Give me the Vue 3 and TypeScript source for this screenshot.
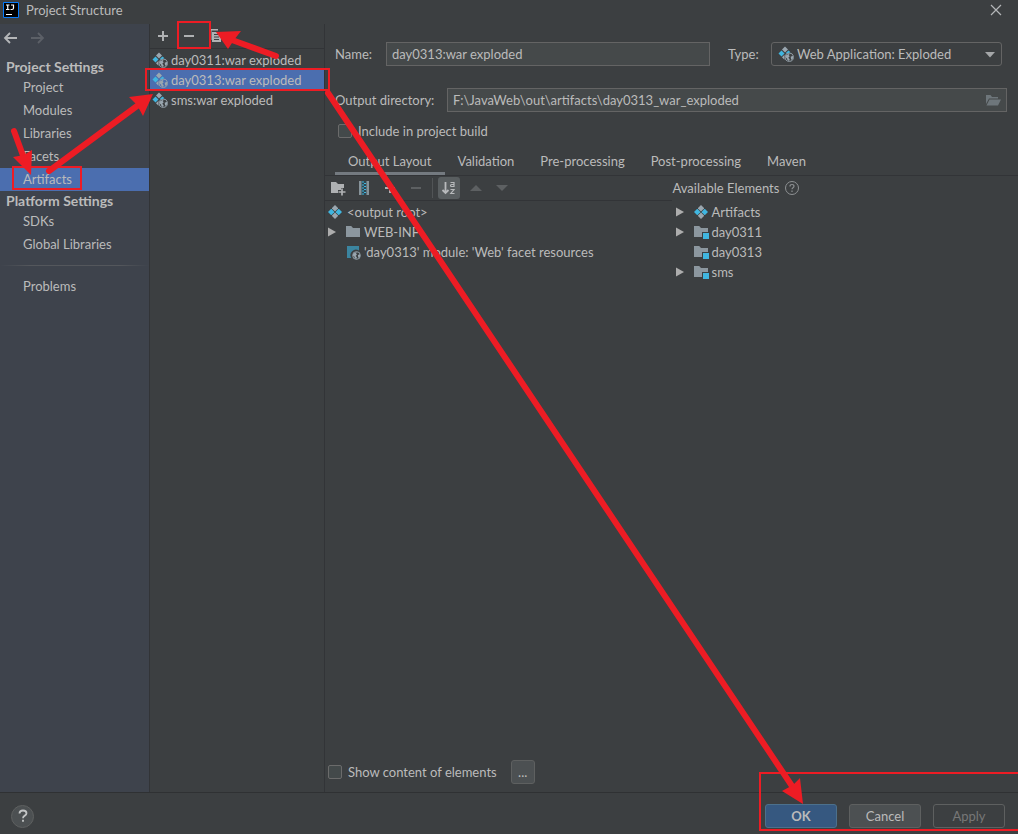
<script setup lang="ts">
import { ref } from 'vue'

interface TreeItem {
  label: string
  icon: 'artifact' | 'folder' | 'module' | 'facet'
  expandable: boolean
}

const projectItems = ['Project', 'Modules', 'Libraries', 'Facets', 'Artifacts']
const platformItems = ['SDKs', 'Global Libraries']
const section = ref('Artifacts')

const artifacts = ['day0311:war exploded', 'day0313:war exploded', 'sms:war exploded']
const current = ref('day0313:war exploded')

const name = ref('day0313:war exploded')
const outputDir = ref('F:\\JavaWeb\\out\\artifacts\\day0313_war_exploded')
const type = ref('Web Application: Exploded')
const includeInBuild = ref(false)
const showContent = ref(false)

const tabs = ['Output Layout', 'Validation', 'Pre-processing', 'Post-processing', 'Maven']
const tab = ref('Output Layout')

const layoutTree: TreeItem[] = [
  { label: 'WEB-INF', icon: 'folder', expandable: true },
  { label: "'day0313' module: 'Web' facet resources", icon: 'facet', expandable: false },
]
const available: TreeItem[] = [
  { label: 'Artifacts', icon: 'artifact', expandable: true },
  { label: 'day0311', icon: 'module', expandable: true },
  { label: 'day0313', icon: 'module', expandable: false },
  { label: 'sms', icon: 'module', expandable: true },
]
</script>

<template>
  <div class="dialog">
    <svg class="defs" width="0" height="0" aria-hidden="true">
      <symbol id="i-artifact" viewBox="0 0 16 16">
        <path d="M8 1l3 3v.6L8.300 7.200h-.6L5 4.600V4z" fill="#9aa7b0" />
        <path d="M8 15l3-3v-.6L8.300 8.800h-.6L5 11.400v.6z" fill="#9aa7b0" />
        <path d="M1 8l3-3h.6l2.600 2.700v.6L4.600 11H4z" fill="#40b6e0" />
        <path d="M15 8l-3-3h-.6L8.800 7.700v.6l2.600 2.700h.6z" fill="#40b6e0" />
      </symbol>
      <symbol id="i-globe" viewBox="0 0 10 10">
        <circle cx="5" cy="5" r="4.300" fill="none" stroke="#9aa7b0" stroke-width="1" />
        <path d="M1.200 3.200L3 2l2.500-.8L4.500 2.800 5.500 4 4 5.500 5.500 7 4.800 9 3 8 2.800 6.500 1 5zM6.500 4.500L8.800 3.500 9 6 7.500 8 6.800 6.500z" fill="#9aa7b0" />
      </symbol>
      <symbol id="i-web" viewBox="0 0 16 16">
        <path d="M7 .5l3 3-3 3-3-3z" fill="#9aa7b0" />
        <path d="M3.500 4.500l3 3-3 3-3-3z" fill="#40b6e0" />
        <path d="M10.500 4.500l2 1.700-3.500 1.600L7.800 7z" fill="#40b6e0" />
        <path d="M6.500 8.800v5L4 11.300z" fill="#9aa7b0" />
        <use href="#i-globe" x="6.500" y="6.500" width="9.500" height="9.500" />
      </symbol>
      <symbol id="i-folder" viewBox="0 0 16 16">
        <path d="M1 2h5.200l1.800 2h7v9H1z" fill="#8c979f" />
      </symbol>
      <symbol id="i-module" viewBox="0 0 16 16">
        <path d="M1 2h5.200l1.800 2h7v4H9v5H1z" fill="#8c979f" />
        <path d="M10 9h6v6h-6z" fill="#40b6e0" />
      </symbol>
      <symbol id="i-facet" viewBox="0 0 16 16">
        <path d="M2 2h12v4.500A5.500 5.500 0 0 0 6.300 14H2z" fill="#3b85a0" />
        <use href="#i-globe" x="7" y="7" width="9" height="9" />
      </symbol>
      <symbol id="i-expand" viewBox="0 0 10 10">
        <path d="M1 .5L9 5 1 9.500z" fill="#adadad" />
      </symbol>
      <symbol id="i-plus" viewBox="0 0 16 16">
        <path d="M8 3v10M3 8h10" stroke="#afb1b3" stroke-width="2" />
      </symbol>
      <symbol id="i-minus" viewBox="0 0 16 16">
        <path d="M3 8h10" stroke="currentColor" stroke-width="2" />
      </symbol>
    </svg>

    <header class="titlebar">
      <svg class="logo" width="16" height="16" viewBox="0 0 16 16" aria-hidden="true">
        <path d="M.5.500h15v15H.5z" fill="#000" stroke="#087cfa" />
        <path d="M3 3h3.500M3 7.500h3.500M4.750 3v4.500M8 3h2.500v3q0 1.500-1.500 1.500H7.500M3 12.500h6" fill="none" stroke="#fff" stroke-width="1.200" />
      </svg>
      <h1>Project Structure</h1>
      <button class="plain close" aria-label="Close">
        <svg width="12" height="12" viewBox="0 0 12 12"><path d="M1 1l10 10M11 1L1 11" stroke="#b4b6b8" stroke-width="1.200" /></svg>
      </button>
    </header>

    <div class="body">
      <nav class="sidebar">
        <div class="history">
          <button class="plain" aria-label="Back">
            <svg width="16" height="16" viewBox="0 0 16 16"><path d="M14 8H2.500M7 3L2 8l5 5" fill="none" stroke="#b4b6b8" stroke-width="1.800" /></svg>
          </button>
          <button class="plain" aria-label="Forward" disabled>
            <svg width="16" height="16" viewBox="0 0 16 16"><path d="M2 8h11.500M9 3l5 5-5 5" fill="none" stroke="#5c6067" stroke-width="1.800" /></svg>
          </button>
        </div>
        <h2>Project Settings</h2>
        <button v-for="item in projectItems" :key="item" class="nav-item" :class="{ selected: section === item }" @click="section = item">{{ item }}</button>
        <h2>Platform Settings</h2>
        <button v-for="item in platformItems" :key="item" class="nav-item" :class="{ selected: section === item }" @click="section = item">{{ item }}</button>
        <hr />
        <button class="nav-item">Problems</button>
      </nav>

      <section class="artifacts">
        <div class="bar">
          <button class="plain" aria-label="Add"><svg width="16" height="16"><use href="#i-plus" /></svg></button>
          <button class="plain" aria-label="Remove"><svg width="16" height="16"><use href="#i-minus" /></svg></button>
          <button class="plain" aria-label="Copy">
            <svg width="16" height="16" viewBox="0 0 16 16"><path d="M3 1h8v1.500H4.500V12H3z" fill="#afb1b3" /><path d="M5 4h9v10H5z" fill="#afb1b3" /><path d="M7 6.500h5M7 9h5M7 11.500h5" stroke="#3c3f41" /></svg>
          </button>
        </div>
        <ul>
          <li v-for="item in artifacts" :key="item">
            <button class="artifact" :class="{ selected: current === item }" @click="current = item">
              <svg width="16" height="16"><use href="#i-web" /></svg>{{ item }}
            </button>
          </li>
        </ul>
      </section>

      <main class="editor">
        <div class="row name-row">
          <label for="name">Name:</label>
          <input id="name" v-model="name" class="field" type="text" />
          <label for="type" class="type-label">Type:</label>
          <div class="combo">
            <svg class="combo-icon" width="16" height="16"><use href="#i-web" /></svg>
            <select id="type" v-model="type">
              <option>Web Application: Exploded</option>
            </select>
            <svg class="combo-arrow" width="10" height="6" viewBox="0 0 10 6"><path d="M0 0h10L5 5.500z" fill="#a5a7a9" /></svg>
          </div>
        </div>
        <div class="row output-row">
          <label for="output">Output directory:</label>
          <div class="field path">
            <input id="output" v-model="outputDir" type="text" />
            <button class="plain" aria-label="Browse">
              <svg width="16" height="16" viewBox="0 0 16 16"><path d="M1 3h4.500l1.500 2h6v1.500H4L1 12z" fill="#6e767b" /><path d="M4.500 7.500H16L13 13.500H1.500z" fill="#6e767b" /></svg>
            </button>
          </div>
        </div>
        <label class="check include"><input v-model="includeInBuild" type="checkbox" />Include in project build</label>

        <div class="tabs" role="tablist">
          <button v-for="item in tabs" :key="item" role="tab" :aria-selected="tab === item" :class="{ active: tab === item }" @click="tab = item">{{ item }}</button>
        </div>

        <div class="panes">
          <section class="layout">
            <div class="bar tools">
              <button class="plain" aria-label="Create directory">
                <svg width="16" height="16" viewBox="0 0 16 16"><path d="M1 2h5l2 2h6v4h-3v2H8v3H1z" fill="#afb1b3" /><path d="M12 8.500v7M8.500 12h7" stroke="#afb1b3" stroke-width="1.700" /></svg>
              </button>
              <button class="plain" aria-label="Create archive">
                <svg width="16" height="16" viewBox="0 0 16 16"><path d="M3 1h10v14H3z" fill="#87939a" /><path d="M5.500 1h5v14h-5z" fill="#2f4650" /><path d="M6 2h2m0 1.500h2M6 5h2m0 1.500h2M6 8h2m0 1.500h2M6 11h2m0 1.500h2M6 14h2" stroke="#40b6e0" /></svg>
              </button>
              <button class="plain" aria-label="Add copy of"><svg width="16" height="16"><use href="#i-plus" /></svg></button>
              <button class="plain off" aria-label="Remove element" disabled><svg width="16" height="16"><use href="#i-minus" /></svg></button>
              <span class="divider"></span>
              <button class="plain sort" aria-label="Sort by name and type">
                <svg width="16" height="16" viewBox="0 0 16 16" fill="none" stroke="#b8babc"><path d="M4.500 2v11M1.500 10l3 3 3-3" stroke-width="1.800" /><path d="M9.500 2.500H13V7M13 4.500h-2.500q-1 0-1 1t1 1H13M9.500 9.500H13L9.800 13.500H13.500" stroke-width="1.200" /></svg>
              </button>
              <button class="plain" aria-label="Move up" disabled><svg width="12" height="6" viewBox="0 0 12 6"><path d="M0 6l6-6 6 6z" fill="#5d6062" /></svg></button>
              <button class="plain" aria-label="Move down" disabled><svg width="12" height="6" viewBox="0 0 12 6"><path d="M0 0h12L6 6z" fill="#5d6062" /></svg></button>
            </div>
            <ul class="tree">
              <li class="root"><svg width="16" height="16"><use href="#i-artifact" /></svg>&lt;output root&gt;</li>
              <li v-for="item in layoutTree" :key="item.label">
                <span class="toggle"><svg v-if="item.expandable" width="10" height="10"><use href="#i-expand" /></svg></span>
                <svg width="16" height="16"><use :href="'#i-' + item.icon" /></svg>{{ item.label }}
              </li>
            </ul>
          </section>
          <section class="available">
            <h3>Available Elements
              <svg width="16" height="16" viewBox="0 0 16 16" aria-hidden="true"><circle cx="8" cy="8" r="6.500" fill="none" stroke="#8e9193" /><path d="M6 6.500q0-2 2-2t2 1.700q0 .9-1 1.500T8 9.300M8 10.500V12" fill="none" stroke="#8e9193" stroke-width="1.200" /></svg>
            </h3>
            <ul class="tree">
              <li v-for="item in available" :key="item.label">
                <span class="toggle"><svg v-if="item.expandable" width="10" height="10"><use href="#i-expand" /></svg></span>
                <svg width="16" height="16"><use :href="'#i-' + item.icon" /></svg>{{ item.label }}
              </li>
            </ul>
          </section>
        </div>

        <div class="content-row">
          <label class="check"><input v-model="showContent" type="checkbox" />Show content of elements</label>
          <button class="btn more">...</button>
        </div>
      </main>
    </div>

    <footer>
      <button class="help" aria-label="Help">
        <svg width="12" height="14" viewBox="0 0 12 14"><path d="M2.500 4.500Q2.500 1.500 6 1.500T9.500 4.300q0 1.400-1.700 2.300Q6 7.600 6 9.200M6 10.700v2" fill="none" stroke="#c3c5c6" stroke-width="1.800" /></svg>
      </button>
      <button class="btn primary">OK</button>
      <button class="btn">Cancel</button>
      <button class="btn" disabled>Apply</button>
    </footer>

    <svg class="marks" width="1018" height="834" viewBox="0 0 1018 834" aria-hidden="true">
      <g fill="none" stroke="#ed1c24" stroke-width="2">
        <path d="M178 22h32v26h-32zM146 69h183v21H146zM13 167h68v22H13zM1018 773H760v57h258" />
      </g>
      <g fill="none" stroke="#ed1c24" stroke-width="6" stroke-linecap="round">
        <path d="M276 56l-44-16M14 131l11 30M49 171l88-65M328 93l464 693" />
      </g>
      <g fill="#ed1c24">
        <path d="M216 32l25-1-7 9-6 9z" />
        <path d="M31 175l1-25-8 5-11 2z" />
        <path d="M153 94l-24 3 8 8 6 11z" />
        <path d="M803 804l-3-26-7 7-11 6z" />
      </g>
    </svg>
  </div>
</template>

<style>
body {
  margin: 0;
  background: #3c3f41;
}
</style>

<style scoped>
.dialog {
  position: relative;
  display: flex;
  flex-direction: column;
  min-height: 100vh;
  overflow: hidden;
  background: #3c3f41;
  color: #bbbbbb;
  font: 13px/20px Lato, "Noto Sans", sans-serif;
}
.dialog * {
  box-sizing: border-box;
}
.defs,
.marks {
  position: absolute;
  top: 0;
  left: 0;
  pointer-events: none;
}
svg {
  flex: none;
  display: block;
}
button,
input,
select {
  margin: 0;
  font: inherit;
  color: inherit;
}
h1,
h2,
h3,
ul {
  margin: 0;
  padding: 0;
  font-size: 13px;
  font-weight: 400;
  list-style: none;
}
.plain {
  display: flex;
  align-items: center;
  justify-content: center;
  padding: 0;
  border: 0;
  background: none;
  color: #afb1b3;
}
.plain.off {
  color: #5d6062;
}
.titlebar {
  display: flex;
  align-items: center;
  gap: 7px;
  height: 24px;
  padding: 0 16px 4px 3px;
}
.close {
  margin-left: auto;
}
.body {
  flex: 1;
  display: grid;
  grid-template-columns: 150px 175px minmax(0, 1fr);
  border-bottom: 1px solid #2f3133;
}
.sidebar {
  display: flex;
  flex-direction: column;
  border-right: 1px solid #323437;
  background: #3e434c;
}
.history {
  display: flex;
  gap: 10px;
  height: 33px;
  padding: 0 3px 5px;
}
.sidebar h2 {
  padding-left: 6px;
  font-size: 14px;
  font-weight: 700;
  line-height: 19px;
}
.nav-item {
  height: 23px;
  padding: 0 0 1px 23px;
  border: 0;
  background: none;
  text-align: left;
}
.selected {
  background: #4b6eaf;
}
.sidebar hr {
  width: 100%;
  height: 1px;
  margin: 9px 0;
  border: 0;
  background: linear-gradient(90deg, transparent, #54575c 20%, #54575c 80%, transparent);
}
.artifacts {
  border-right: 1px solid #323437;
}
.bar {
  display: flex;
  align-items: center;
  gap: 10px;
  height: 25px;
  padding: 0 5px;
  border-bottom: 1px solid #323437;
}
.artifacts ul {
  padding-top: 1px;
}
.artifact {
  display: flex;
  align-items: center;
  gap: 3px;
  width: 100%;
  height: 20px;
  padding: 0 0 0 2px;
  border: 0;
  background-color: transparent;
  white-space: nowrap;
}
.artifact.selected {
  background-color: #4b6eaf;
}
.editor {
  display: flex;
  flex-direction: column;
  padding-top: 18px;
}
.row {
  display: flex;
  align-items: center;
  height: 24px;
  padding-left: 10px;
}
.row label {
  white-space: nowrap;
}
.field {
  height: 24px;
  padding: 0 5px;
  border: 1px solid #646464;
  background: #45494a;
  outline: 0;
}
.name-row {
  padding-right: 16px;
}
.name-row > label:first-child {
  width: 51px;
}
.name-row .field {
  flex: 1;
  min-width: 0;
}
.name-row .type-label {
  width: 61px;
  padding-left: 18px;
}
.combo {
  position: relative;
  width: 231px;
}
.combo select {
  display: block;
  width: 100%;
  height: 24px;
  padding: 0 24px 0 25px;
  border: 1px solid #646464;
  border-radius: 3px;
  background: transparent;
  appearance: none;
  outline: 0;
}
.combo-icon {
  position: absolute;
  top: 4px;
  left: 7px;
}
.combo-arrow {
  position: absolute;
  top: 10px;
  right: 7px;
}
.output-row {
  margin-top: 22px;
  padding-right: 11px;
}
.output-row label {
  width: 112px;
}
.path {
  flex: 1;
  display: flex;
  min-width: 0;
}
.path input {
  flex: 1;
  min-width: 0;
  padding: 0;
  border: 0;
  background: none;
  outline: 0;
}
.check {
  display: flex;
  align-items: center;
  gap: 6px;
}
.check input {
  width: 14px;
  height: 14px;
  appearance: none;
  border: 1px solid #6b6b6b;
  border-radius: 2px;
  background: #43494a;
}
.include {
  height: 20px;
  margin: 9px 0 0 13px;
}
.tabs {
  display: flex;
  height: 35px;
  padding: 9px 0 0 10px;
  border-bottom: 1px solid #323437;
}
.tabs button {
  padding: 0 13px;
  border: 0;
  border-bottom: 3px solid transparent;
  background: none;
  white-space: nowrap;
}
.tabs .active {
  border-bottom-color: #747a80;
}
.panes {
  flex: 1;
  display: grid;
  grid-template-columns: minmax(0, 1fr) minmax(0, 1fr);
}
.divider {
  width: 1px;
  height: 20px;
  margin-left: -2px;
  background: #515456;
}
.sort {
  width: 22px;
  height: 22px;
  margin: 0 -2px 0 -5px;
  border-radius: 3px;
  background: #595e60;
}
.tools .plain:nth-last-child(-n + 2) {
  width: 16px;
}
.tree {
  padding-top: 1px;
}
.tree li {
  display: flex;
  align-items: center;
  gap: 3px;
  height: 20px;
  white-space: nowrap;
}
.layout li {
  padding-left: 2px;
}
.toggle {
  width: 15px;
}
.tree .root {
  gap: 4px;
}
.available h3 {
  display: flex;
  align-items: center;
  gap: 5px;
  height: 24px;
  margin-bottom: 1px;
  padding-left: 1px;
}
.available li {
  padding-left: 3px;
}
.content-row {
  display: flex;
  align-items: center;
  gap: 14px;
  padding: 0 3px 8px;
}
.btn {
  width: 72px;
  height: 24px;
  padding: 0;
  border: 1px solid #5e6060;
  border-radius: 3px;
  background: #4c5052;
}
.btn.more {
  width: 24px;
}
.btn.primary {
  border-color: #4c708c;
  background: #365880;
  font-weight: 700;
}
.btn:disabled {
  background: transparent;
  color: #777777;
}
footer {
  display: flex;
  align-items: center;
  gap: 12px;
  height: 41px;
  padding: 5px 13px 0 11px;
}
.help {
  display: flex;
  align-items: center;
  justify-content: center;
  width: 23px;
  height: 23px;
  margin-right: auto;
  padding: 0;
  border: 1px solid #5e6060;
  border-radius: 50%;
  background: #4c5052;
}
</style>
